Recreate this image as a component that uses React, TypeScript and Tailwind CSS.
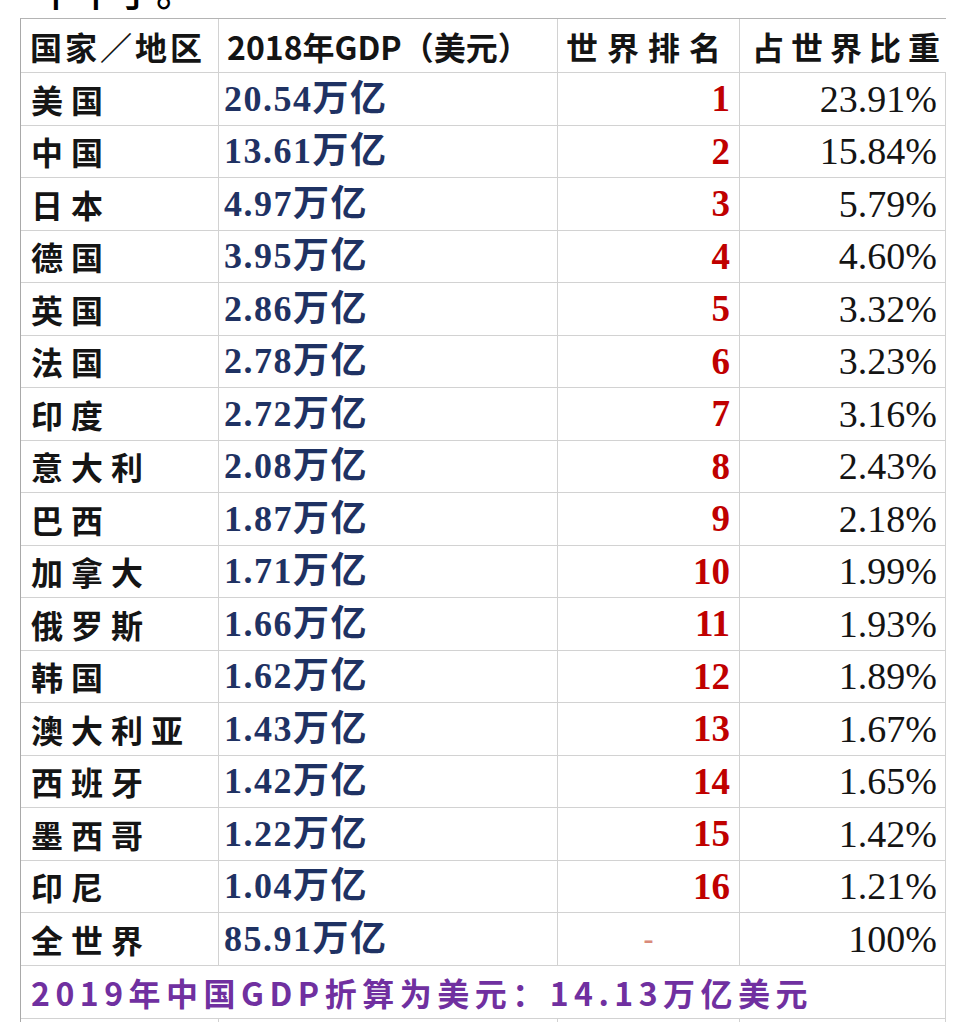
const rows = [
  { name: "美国", gdp: "20.54万亿", rank: "1", share: "23.91%" },
  { name: "中国", gdp: "13.61万亿", rank: "2", share: "15.84%" },
  { name: "日本", gdp: "4.97万亿", rank: "3", share: "5.79%" },
  { name: "德国", gdp: "3.95万亿", rank: "4", share: "4.60%" },
  { name: "英国", gdp: "2.86万亿", rank: "5", share: "3.32%" },
  { name: "法国", gdp: "2.78万亿", rank: "6", share: "3.23%" },
  { name: "印度", gdp: "2.72万亿", rank: "7", share: "3.16%" },
  { name: "意大利", gdp: "2.08万亿", rank: "8", share: "2.43%" },
  { name: "巴西", gdp: "1.87万亿", rank: "9", share: "2.18%" },
  { name: "加拿大", gdp: "1.71万亿", rank: "10", share: "1.99%" },
  { name: "俄罗斯", gdp: "1.66万亿", rank: "11", share: "1.93%" },
  { name: "韩国", gdp: "1.62万亿", rank: "12", share: "1.89%" },
  { name: "澳大利亚", gdp: "1.43万亿", rank: "13", share: "1.67%" },
  { name: "西班牙", gdp: "1.42万亿", rank: "14", share: "1.65%" },
  { name: "墨西哥", gdp: "1.22万亿", rank: "15", share: "1.42%" },
  { name: "印尼", gdp: "1.04万亿", rank: "16", share: "1.21%" },
  { name: "全世界", gdp: "85.91万亿", rank: "-", share: "100%" },
];

const cjk = "font-['Noto_Sans_CJK_SC',sans-serif]";
const serif = "font-['Liberation_Serif','Noto_Sans_CJK_SC',serif]";
const cell = "h-[52.5px] border-r border-b border-[#d2d2d2] flex items-center leading-none";

export default function App() {
  return (
    <div className="w-[964px] h-[1022px] overflow-hidden bg-white">
      {/* clipped tail of the previous paragraph */}
      <div className="h-[18px] overflow-hidden pl-[36px]">
        <div className={`${cjk} -mt-[31px] text-[40px] leading-none font-medium text-black`}>中中了。</div>
      </div>

      <div className="ml-[20px] w-[926px] border-l border-t border-l-[#a9a9a9] border-t-[#b4b4b4] grid grid-cols-[198px_339px_182px_206px]">
        {/* header */}
        <div className={`${cjk} h-[54px] border-r border-b border-[#d2d2d2] flex items-center pl-[9px] text-[32px] font-bold tracking-[3px] text-[#141414] leading-none`}>
          国家／地区
        </div>
        <div className={`${cjk} h-[54px] border-r border-b border-[#d2d2d2] flex items-center pl-[8px] text-[32px] font-bold text-[#141414] leading-none`}>
          2018年GDP（美元）
        </div>
        <div className={`${cjk} h-[54px] border-r border-b border-[#d2d2d2] flex items-center pl-[8px] text-[32px] font-bold tracking-[9px] text-[#141414] leading-none`}>
          世界排名
        </div>
        <div className={`${cjk} h-[54px] border-b border-[#d2d2d2] flex items-center pl-[12px] text-[32px] font-bold tracking-[7px] text-[#141414] leading-none whitespace-nowrap`}>
          占世界比重
        </div>

        {rows.map((r) => (
          <div key={r.name} className="contents">
            <div className={`${cell} ${cjk} pl-[10px] text-[32px] font-bold tracking-[8px] text-[#151515]`}>{r.name}</div>
            <div className={`${cell} ${serif} pl-[5px] text-[36px] font-bold tracking-[1.5px] text-[#1f3263]`}>{r.gdp}</div>
            {r.rank === "-" ? (
              <div className={`${cell} ${serif} justify-center text-[30px] font-bold text-[#d98a7a]`}>-</div>
            ) : (
              <div className={`${cell} ${serif} justify-end pr-[9px] text-[37px] font-bold text-[#c00000]`}>{r.rank}</div>
            )}
            <div className={`${cell} ${serif} justify-end pr-[8px] text-[38px] text-[#141414]`}>{r.share}</div>
          </div>
        ))}

        {/* footnote */}
        <div className={`${cjk} col-span-4 h-[53px] border-r border-b border-[#d2d2d2] flex items-center pl-[10px] text-[32px] font-bold tracking-[5.5px] text-[#7030a0] leading-none whitespace-nowrap`}>
          2019年中国GDP折算为美元：14.13万亿美元
        </div>

        {/* next row, cut off */}
        <div className="h-[10px] border-r border-[#d2d2d2]" />
        <div className="h-[10px] border-r border-[#d2d2d2]" />
        <div className="h-[10px] border-r border-[#d2d2d2]" />
        <div className="h-[10px] border-r border-[#d2d2d2]" />
      </div>
    </div>
  );
}
